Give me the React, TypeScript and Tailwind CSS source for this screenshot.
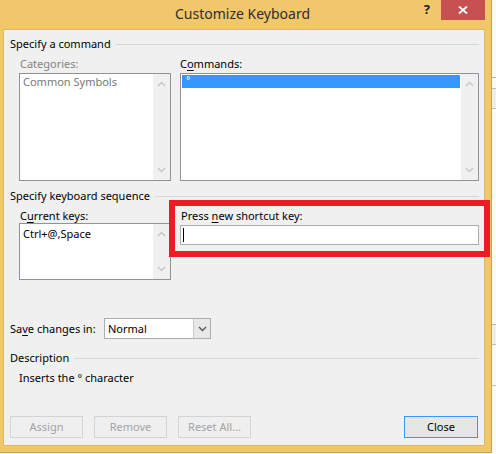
import React from "react";

function Chev({ down = false, color = "#c6c6c6" }: { down?: boolean; color?: string }) {
  return (
    <svg width="9" height="6" viewBox="0 0 9 6" className="block">
      <polyline
        points={down ? "1,1 4.5,4.5 8,1" : "1,5 4.5,1.5 8,5"}
        fill="none"
        stroke={color}
        strokeWidth="1.4"
      />
    </svg>
  );
}

function ScrollBar() {
  return (
    <div className="w-[17px] shrink-0 bg-[#f0f0f0] flex flex-col items-center justify-between py-[7px]">
      <Chev />
      <Chev down />
    </div>
  );
}

function GroupHeader({ children }: { children: React.ReactNode }) {
  return (
    <div className="h-[16px] leading-[16px] flex items-center gap-[5px]">
      <span className="whitespace-nowrap">{children}</span>
      <div className="flex-1 h-px bg-[#d8d8d8]" />
    </div>
  );
}

function Btn({ children, primary = false }: { children: React.ReactNode; primary?: boolean }) {
  return (
    <div
      className={
        primary
          ? "w-[74px] h-[22px] flex items-center justify-center border border-[#3399ff] bg-[#e6e6e6] text-black"
          : "w-[73px] h-[22px] flex items-center justify-center border border-[#d4d4d4] bg-[#efefef] text-[#a3a3a3]"
      }
    >
      {children}
    </div>
  );
}

export default function App() {
  return (
    <div className="w-[496px] h-[454px] bg-[#f4f4f4] flex relative overflow-hidden font-['Noto_Sans',sans-serif] text-[11px] text-black">
      {/* window */}
      <div className="w-[492px] h-[453px] shrink-0 bg-[#f0c86b] border-r border-b border-[#c9a24e] flex flex-col">
        {/* title bar */}
        <div className="h-[29px] shrink-0 flex">
          <div className="flex-1" />
          <div className="pt-[4px] text-[14px] leading-[20px] text-[#2e2e2e] whitespace-nowrap">
            Customize Keyboard
          </div>
          <div className="flex-1 flex justify-end pr-[6px]">
            <div className="pt-[1px] mr-[11px] text-[13px] leading-[16px] font-bold text-[#222]">?</div>
            <div className="w-[44px] h-[20px] bg-[#c75050] flex items-center justify-center">
              <svg width="10" height="8" viewBox="0 0 10 8">
                <path d="M1 0.5 L9 7.5 M9 0.5 L1 7.5" stroke="#ffffff" strokeWidth="1.8" fill="none" />
              </svg>
            </div>
          </div>
        </div>

        {/* client */}
        <div className="ml-[3px] w-[482px] h-[417px] shrink-0 bg-[#f0f0f0] border border-[#dcb862] pl-[6px] pr-[5px] pt-[6px] flex flex-col">
          <GroupHeader>Specify a command</GroupHeader>

          <div className="mt-[4px] ml-[9px] flex gap-[9px]">
            <div className="w-[152px] flex flex-col">
              <div className="h-[16px] leading-[16px] pl-[1px] text-[#838383]">Categories:</div>
              <div className="mt-[1px] h-[108px] border border-[#8f9299] bg-white flex">
                <div className="flex-1 pl-[3px] leading-[16px] text-[#777777]">Common Symbols</div>
                <ScrollBar />
              </div>
            </div>
            <div className="w-[299px] flex flex-col">
              <div className="h-[16px] leading-[16px]">
                C<span className="underline underline-offset-2">o</span>mmands:
              </div>
              <div className="mt-[1px] h-[108px] border border-[#8f9299] bg-white flex">
                <div className="flex-1 p-[1px]">
                  <div className="h-[13px] bg-[#3399ff] text-white text-[10px] leading-[10px] pl-[4px]">°</div>
                </div>
                <ScrollBar />
              </div>
            </div>
          </div>

          <div className="mt-[7px]">
            <GroupHeader>Specify keyboard sequence</GroupHeader>
          </div>

          <div className="mt-[4px] ml-[9px] flex gap-[9px]">
            <div className="w-[152px] flex flex-col">
              <div className="h-[15px] leading-[15px] pl-[1px]">
                C<span className="underline underline-offset-2">u</span>rrent keys:
              </div>
              <div className="h-[57px] border border-[#8f9299] bg-white flex">
                <div className="flex-1 pl-[3px] pt-[2px] leading-[16px]">Ctrl+@,Space</div>
                <ScrollBar />
              </div>
            </div>
            <div className="w-[299px] flex flex-col">
              <div className="h-[15px] leading-[15px] pl-[1px]">
                Press <span className="underline underline-offset-2">n</span>ew shortcut key:
              </div>
              <div className="mt-[2px] h-[20px] border border-[#abadb3] bg-white flex items-center pl-[2px]">
                <div className="w-px h-[14px] bg-black" />
              </div>
            </div>
          </div>

          <div className="mt-[38px] h-[21px] flex items-center">
            <div className="w-[94px] leading-[16px] whitespace-nowrap">
              Sa<span className="underline underline-offset-2">v</span>e changes in:
            </div>
            <div className="w-[107px] h-[21px] border border-[#abadb3] bg-white flex">
              <div className="flex-1 pl-[3px] leading-[19px]">Normal</div>
              <div className="w-[17px] bg-[#e8e8e8] border-l border-[#c9c9c9] flex items-center justify-center">
                <Chev down color="#555555" />
              </div>
            </div>
          </div>

          <div className="mt-[11px]">
            <GroupHeader>Description</GroupHeader>
          </div>

          <div className="mt-[4px] ml-[9px] h-[16px] leading-[16px]">Inserts the ° character</div>

          <div className="mt-[30px] flex items-center">
            <div className="flex gap-[11px]">
              <Btn>Assign</Btn>
              <Btn>Remove</Btn>
              <Btn>Reset All...</Btn>
            </div>
            <div className="flex-1" />
            <div className="mr-[1px]">
              <Btn primary>Close</Btn>
            </div>
          </div>
        </div>
      </div>

      {/* background window edge */}
      <div className="flex-1 flex flex-col bg-[#fafafa]">
        <div className="h-[77px]" />
        <div className="h-[11px] border-t border-[#b5b5b5]" />
        <div className="h-[20px] border-t border-[#c0c0c0] bg-[#eeeeee]" />
        <div className="h-[216px] border-t border-[#c0c0c0]" />
        <div className="h-[20px] border-t border-[#b5b5b5] bg-[#eeeeee]" />
        <div className="h-[41px] border-t border-[#c0c0c0]" />
        <div className="flex-1 border-t border-[#c0c0c0]" />
      </div>

      {/* red annotation */}
      <div className="absolute left-[169px] top-[200px] w-[321px] h-[57px] border-[6px] border-[#ed1c24]" />
    </div>
  );
}
